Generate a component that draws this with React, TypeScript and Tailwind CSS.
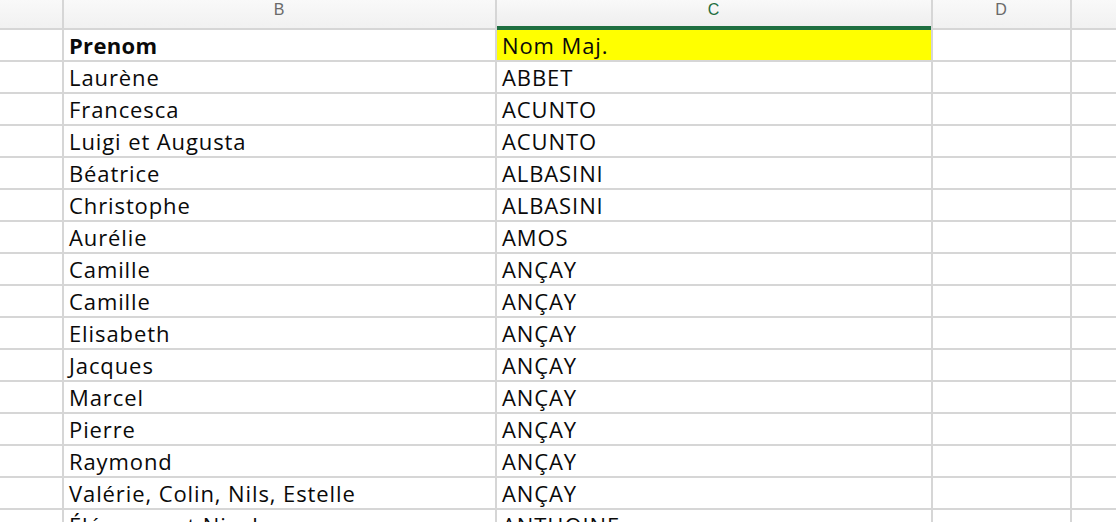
const rows: [string, string][] = [
  ["Laurène", "ABBET"],
  ["Francesca", "ACUNTO"],
  ["Luigi et Augusta", "ACUNTO"],
  ["Béatrice", "ALBASINI"],
  ["Christophe", "ALBASINI"],
  ["Aurélie", "AMOS"],
  ["Camille", "ANÇAY"],
  ["Camille", "ANÇAY"],
  ["Elisabeth", "ANÇAY"],
  ["Jacques", "ANÇAY"],
  ["Marcel", "ANÇAY"],
  ["Pierre", "ANÇAY"],
  ["Raymond", "ANÇAY"],
  ["Valérie, Colin, Nils, Estelle", "ANÇAY"],
  ["Éléonore et Nicolas", "ANTHOINE"],
];

const cell = "h-[30px] pl-[5px] leading-[30px] whitespace-nowrap overflow-hidden";

function HeaderCell({ label, active }: { label?: string; active?: boolean }) {
  return (
    <div
      className={
        active
          ? "relative z-10 h-[30px] -mb-[2px] border-b-4 border-[#1e6e3f] bg-gradient-to-b from-[#f9f9f9] to-[#eeeeee] text-center text-[16px] leading-[16px] pt-[2px] text-[#1e6e3f]"
          : "h-[28px] bg-gradient-to-b from-[#f9f9f9] to-[#f1f1f1] text-center text-[16px] leading-[16px] pt-[2px] text-[#6a6a6a]"
      }
      style={{ fontFamily: "'Liberation Sans', Arial, sans-serif" }}
    >
      {label}
    </div>
  );
}

export default function App() {
  return (
    <div className="w-[1116px] h-[522px] overflow-hidden bg-white">
      <div
        className="grid grid-cols-[62px_431px_434px_137px_1fr] auto-rows-min gap-[2px] bg-[#d6d6d6] text-[22px] tracking-[0.9px] text-[#0a0a0a]"
        style={{ fontFamily: "'Open Sans', 'Noto Sans', sans-serif" }}
      >
        <HeaderCell />
        <HeaderCell label="B" />
        <HeaderCell label="C" active />
        <HeaderCell label="D" />
        <HeaderCell />

        <div className="bg-white h-[30px]" />
        <div className={cell + " bg-white font-bold tracking-[0.3px]"}>Prenom</div>
        <div className={cell + " bg-[#ffff00]"}>Nom Maj.</div>
        <div className="bg-white h-[30px]" />
        <div className="bg-white h-[30px]" />

        {rows.map(([first, last], i) => (
          <div key={i} className="contents">
            <div className="bg-white h-[30px]" />
            <div className={cell + " bg-white"}>{first}</div>
            <div className={cell + " bg-white"}>{last}</div>
            <div className="bg-white h-[30px]" />
            <div className="bg-white h-[30px]" />
          </div>
        ))}
      </div>
    </div>
  );
}
